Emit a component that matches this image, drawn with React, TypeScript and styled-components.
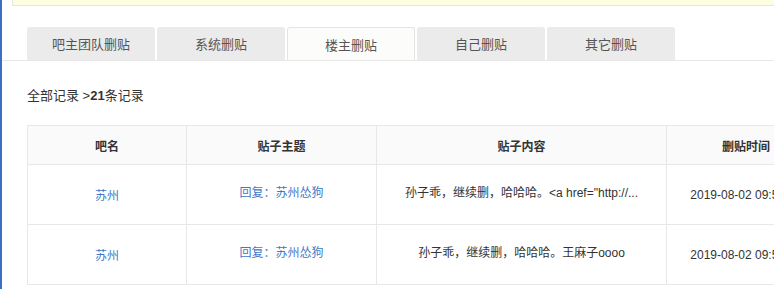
import React from "react";
import styled, { createGlobalStyle } from "styled-components";

const Global = createGlobalStyle`
  html, body { margin: 0; padding: 0; background: #fff; overflow: hidden; }
  body { font-family: "Liberation Sans", "Noto Sans CJK SC", sans-serif; color: #333; }
`;

const Page = styled.div`
  display: flex;
  min-height: 289px;
`;

const LeftBar = styled.div`
  width: 2px;
  flex: none;
  background: #3a70c2;
`;

const Main = styled.div`
  flex: 1;
  min-width: 0;
`;

const Notice = styled.div`
  margin-left: 10px;
  height: 5px;
  background: #fefde2;
  border-left: 1px solid #e6e6da;
  border-bottom: 1px solid #e6e6da;
`;

const TabBar = styled.div`
  display: flex;
  gap: 2px;
  margin-top: 21px;
  padding-left: 25px;
  height: 33px;
  border-bottom: 1px solid #e8e8e8;
`;

const Tab = styled.div<{ $active?: boolean }>`
  box-sizing: border-box;
  width: 128px;
  height: 33px;
  display: flex;
  align-items: center;
  justify-content: center;
  font-size: 13px;
  color: #555;
  border-radius: 3px 3px 0 0;
  background: ${(p) => (p.$active ? "#fcfcfa" : "#ebebeb")};
  border: ${(p) => (p.$active ? "1px solid #e4e4e4" : "none")};
  border-bottom: none;
  cursor: pointer;
`;

const Crumb = styled.div`
  margin-top: 25px;
  padding-left: 25px;
  font-size: 13px;
  line-height: 20px;
  color: #333;
  b { font-weight: bold; }
`;

const Table = styled.table`
  margin: 19px 0 0 25px;
  border-collapse: collapse;
  table-layout: fixed;
  width: 798px;
  border: 1px solid #e8e8e8;
`;

const Th = styled.th`
  height: 38px;
  padding: 0;
  background: #fafafa;
  border: 1px solid #e8e8e8;
  font-size: 12px;
  font-weight: bold;
  color: #333;
  text-align: center;
`;

const Td = styled.td<{ $raised?: boolean }>`
  height: 60px;
  padding: 0 0 ${(p) => (p.$raised ? "6px" : "0")} 0;
  box-sizing: border-box;
  border: 1px solid #e8e8e8;
  font-size: 12px;
  color: #333;
  text-align: center;
  vertical-align: middle;
  white-space: nowrap;
  overflow: hidden;
`;

const Link = styled.a`
  color: #3f78c8;
  text-decoration: none;
  cursor: pointer;
`;

const tabs = ["吧主团队删贴", "系统删贴", "楼主删贴", "自己删贴", "其它删贴"];

const rows = [
  {
    bar: "苏州",
    title: "回复：苏州怂狗",
    content: '孙子乖，继续删，哈哈哈。<a href="http://...',
    time: "2019-08-02 09:52:18",
  },
  {
    bar: "苏州",
    title: "回复：苏州怂狗",
    content: "孙子乖，继续删，哈哈哈。王麻子oooo",
    time: "2019-08-02 09:52:06",
  },
];

export default function App() {
  return (
    <>
      <Global />
      <Page>
        <LeftBar />
        <Main>
          <Notice />
          <TabBar>
            {tabs.map((t, i) => (
              <Tab key={t} $active={i === 2}>
                {t}
              </Tab>
            ))}
          </TabBar>
          <Crumb>
            全部记录 &gt;<b>21</b>条记录
          </Crumb>
          <Table>
            <colgroup>
              <col style={{ width: 159 }} />
              <col style={{ width: 190 }} />
              <col style={{ width: 290 }} />
              <col style={{ width: 159 }} />
            </colgroup>
            <thead>
              <tr>
                <Th>吧名</Th>
                <Th>贴子主题</Th>
                <Th>贴子内容</Th>
                <Th>删贴时间</Th>
              </tr>
            </thead>
            <tbody>
              {rows.map((r, i) => (
                <tr key={i}>
                  <Td>
                    <Link>{r.bar}</Link>
                  </Td>
                  <Td $raised>
                    <Link>{r.title}</Link>
                  </Td>
                  <Td $raised>{r.content}</Td>
                  <Td>{r.time}</Td>
                </tr>
              ))}
            </tbody>
          </Table>
        </Main>
      </Page>
    </>
  );
}
